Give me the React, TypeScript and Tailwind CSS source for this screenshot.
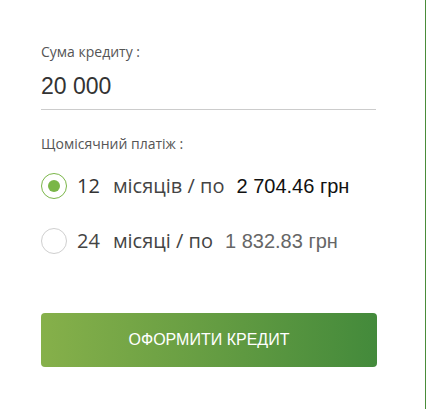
import React from "react";

export default function App() {
  return (
    <div className="w-[427px] h-[409px] bg-white">
      <div className="w-[426px] h-[409px] border-r border-[#4a8c3a] pl-[41px] pr-[50px] pt-[43px]">
        <div className="font-['Open_Sans',sans-serif] text-[14px] leading-[18px] text-[#555555]">
          Сума кредиту :
        </div>
        <div className="mt-[12px] font-['Liberation_Sans',Arial,sans-serif] text-[23px] leading-[26px] text-[#333333]">
          20 000
        </div>
        <div className="mt-[10px] h-px w-[335px] bg-[#cccccc]" />
        <div className="mt-[25px] font-['Open_Sans',sans-serif] text-[14px] leading-[18px] text-[#555555]">
          Щомісячний платіж :
        </div>

        <div className="mt-[20px] flex flex-col gap-[29px]">
          <div className="flex items-center h-[26px]">
            <div className="w-[26px] h-[26px] rounded-full border border-[#7ab648] flex items-center justify-center">
              <div className="w-[12px] h-[12px] rounded-full bg-[#7ab648]" />
            </div>
            <span className="ml-[10px] font-['Open_Sans',sans-serif] text-[20px] text-[#333333]">
              12
            </span>
            <span className="ml-[13px] font-['Open_Sans',sans-serif] text-[20px] text-[#444444]">
              місяців / по
            </span>
            <span className="ml-[12px] font-['Liberation_Sans',Arial,sans-serif] text-[20px] text-[#111111]">
              2 704.46 грн
            </span>
          </div>
          <div className="flex items-center h-[26px]">
            <div className="w-[26px] h-[26px] rounded-full border border-[#cfcfcf]" />
            <span className="ml-[10px] font-['Open_Sans',sans-serif] text-[20px] text-[#444444]">
              24
            </span>
            <span className="ml-[13px] font-['Open_Sans',sans-serif] text-[20px] text-[#444444]">
              місяці / по
            </span>
            <span className="ml-[12px] font-['Liberation_Sans',Arial,sans-serif] text-[20px] text-[#666666]">
              1 832.83 грн
            </span>
          </div>
        </div>

        <button className="mt-[59px] w-[336px] h-[54px] rounded-[4px] bg-gradient-to-r from-[#86b04a] to-[#438a3b] font-['Liberation_Sans',Arial,sans-serif] text-white text-[16px] flex items-center justify-center">
          ОФОРМИТИ КРЕДИТ
        </button>
      </div>
    </div>
  );
}
